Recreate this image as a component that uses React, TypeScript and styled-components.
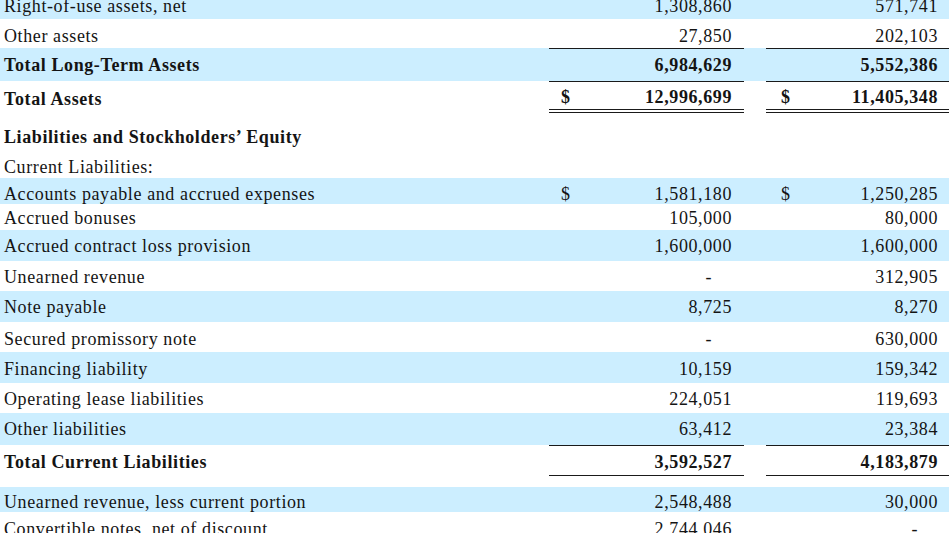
import React from 'react'
import styled, { createGlobalStyle } from 'styled-components'

type Under = 'single' | 'double'

type TRow = {
  label: string
  a?: string
  b?: string
  dollar?: boolean
  bold?: boolean
  shade?: boolean
  under?: Under
  h: number
  pb: number
}

const rows: TRow[] = [
  { label: 'Right-of-use assets, net', a: '1,308,860', b: '571,741', shade: true, h: 31, pb: 3 },
  { label: 'Other assets', a: '27,850', b: '202,103', under: 'single', h: 29, pb: 2 },
  { label: 'Total Long-Term Assets', a: '6,984,629', b: '5,552,386', bold: true, shade: true, under: 'single', h: 33, pb: 6 },
  { label: 'Total Assets', a: '12,996,699', b: '11,405,348', dollar: true, bold: true, under: 'double', h: 30, pb: 2 },
  { label: 'Liabilities and Stockholders’ Equity', bold: true, h: 39, pb: 3 },
  { label: 'Current Liabilities:', h: 28, pb: 1 },
  { label: 'Accounts payable and accrued expenses', a: '1,581,180', b: '1,250,285', dollar: true, shade: true, h: 26, pb: 0 },
  { label: 'Accrued bonuses', a: '105,000', b: '80,000', h: 26, pb: 2 },
  { label: 'Accrued contract loss provision', a: '1,600,000', b: '1,600,000', shade: true, h: 31, pb: 5 },
  { label: 'Unearned revenue', a: '-', b: '312,905', h: 30, pb: 4 },
  { label: 'Note payable', a: '8,725', b: '8,270', shade: true, h: 31, pb: 5 },
  { label: 'Secured promissory note', a: '-', b: '630,000', h: 30, pb: 3 },
  { label: 'Financing liability', a: '10,159', b: '159,342', shade: true, h: 31, pb: 4 },
  { label: 'Operating lease liabilities', a: '224,051', b: '119,693', h: 30, pb: 4 },
  { label: 'Other liabilities', a: '63,412', b: '23,384', shade: true, under: 'single', h: 32, pb: 6 },
  { label: 'Total Current Liabilities', a: '3,592,527', b: '4,183,879', bold: true, under: 'single', h: 30, pb: 3 },
  { label: '', h: 12, pb: 0 },
  { label: 'Unearned revenue, less current portion', a: '2,548,488', b: '30,000', shade: true, h: 25, pb: 0 },
  { label: 'Convertible notes, net of discount', a: '2,744,046', b: '-', h: 30, pb: 3 },
]

const GlobalStyle = createGlobalStyle`
  html, body {
    margin: 0;
    padding: 0;
    background: #ffffff;
    overflow: hidden;
  }
`

const Sheet = styled.div`
  width: 950px;
  height: 533px;
  overflow: hidden;
  font-family: 'Liberation Serif', 'Times New Roman', serif;
  font-size: 18px;
  line-height: 20px;
  letter-spacing: 0.6px;
  color: #141414;
`

const Table = styled.table`
  margin-top: -12px;
  width: 949px;
  table-layout: fixed;
  border-collapse: collapse;
  border-spacing: 0;
`

const Row = styled.tr<{ $shade?: boolean; $bold?: boolean; $h: number }>`
  height: ${(p) => p.$h}px;
  background: ${(p) => (p.$shade ? '#cceeff' : 'transparent')};
  font-weight: ${(p) => (p.$bold ? 700 : 400)};
`

const Cell = styled.td<{ $pb: number }>`
  padding: 0 0 ${(p) => p.$pb}px 0;
  vertical-align: bottom;
  white-space: nowrap;
`

const LabelCell = styled(Cell)`
  padding-left: 4px;
`

const ValueCell = styled(Cell)<{ $under?: Under; $right: number; $left: number }>`
  padding-right: ${(p) => p.$right}px;
  padding-left: ${(p) => p.$left}px;
  border-bottom: ${(p) =>
    p.$under === 'double' ? '4px double #1a1a1a' : p.$under === 'single' ? '1px solid #1a1a1a' : 'none'};
`

const ValueLine = styled.div`
  display: flex;
  justify-content: space-between;
  align-items: baseline;
`

const Dollar = styled.span``

const Amount = styled.span<{ $dash?: boolean }>`
  margin-left: auto;
  padding-right: ${(p) => (p.$dash ? 20 : 0)}px;
`

function Value({ v, dollar }: { v?: string; dollar?: boolean }) {
  return (
    <ValueLine>
      {dollar && <Dollar>$</Dollar>}
      {v && <Amount $dash={v === '-'}>{v}</Amount>}
    </ValueLine>
  )
}

export default function App() {
  return (
    <>
      <GlobalStyle />
      <Sheet>
        <Table>
          <colgroup>
            <col style={{ width: 549 }} />
            <col style={{ width: 195 }} />
            <col style={{ width: 22 }} />
            <col style={{ width: 183 }} />
          </colgroup>
          <tbody>
            {rows.map((r, i) => (
              <Row key={i} $shade={r.shade} $bold={r.bold} $h={r.h}>
                <LabelCell $pb={r.pb}>{r.label}</LabelCell>
                <ValueCell $pb={r.pb} $under={r.under} $left={12} $right={12}>
                  <Value v={r.a} dollar={r.dollar} />
                </ValueCell>
                <Cell $pb={r.pb} />
                <ValueCell $pb={r.pb} $under={r.under} $left={15} $right={11}>
                  <Value v={r.b} dollar={r.dollar} />
                </ValueCell>
              </Row>
            ))}
          </tbody>
        </Table>
      </Sheet>
    </>
  )
}
